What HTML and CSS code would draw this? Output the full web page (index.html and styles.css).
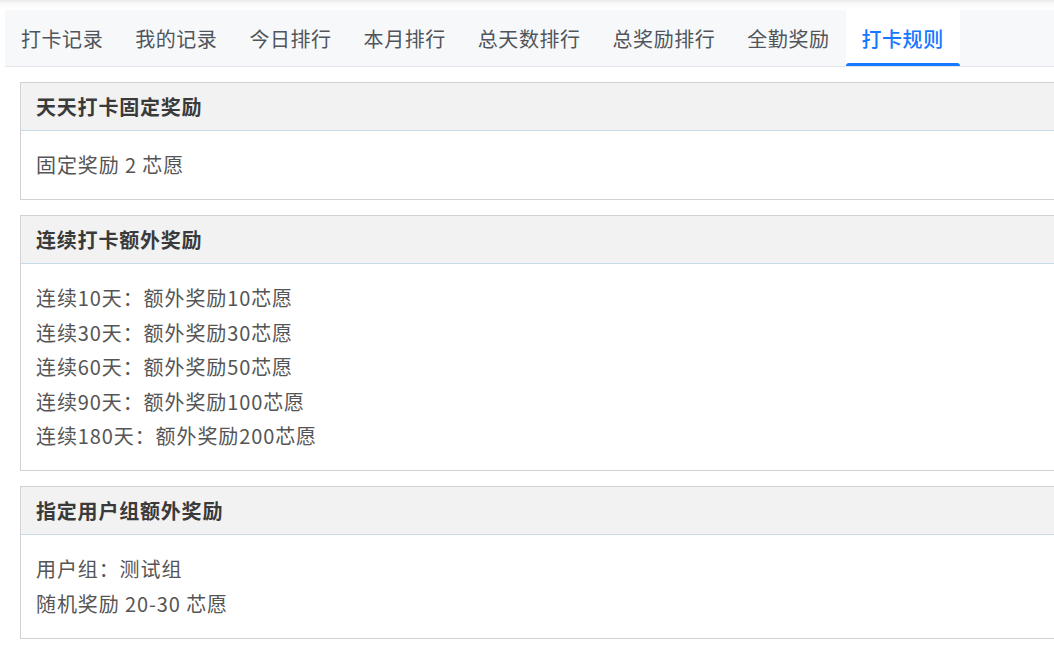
FILE: index.html
```html
<!DOCTYPE html>
<html lang="zh-CN">
<head>
<meta charset="utf-8">
<title>打卡规则</title>
<link rel="stylesheet" href="styles.css">
</head>
<body>
<div class="topshade"></div>
<nav class="tabs">
  <a class="tab">打卡记录</a>
  <a class="tab">我的记录</a>
  <a class="tab">今日排行</a>
  <a class="tab">本月排行</a>
  <a class="tab">总天数排行</a>
  <a class="tab">总奖励排行</a>
  <a class="tab">全勤奖励</a>
  <a class="tab active">打卡规则</a>
</nav>
<main class="content">
  <section class="panel">
    <div class="panel-head">天天打卡固定奖励</div>
    <div class="panel-body">
      <p>固定奖励 2 芯愿</p>
    </div>
  </section>
  <section class="panel">
    <div class="panel-head">连续打卡额外奖励</div>
    <div class="panel-body">
      <p>连续10天：额外奖励10芯愿</p>
      <p>连续30天：额外奖励30芯愿</p>
      <p>连续60天：额外奖励50芯愿</p>
      <p>连续90天：额外奖励100芯愿</p>
      <p>连续180天：额外奖励200芯愿</p>
    </div>
  </section>
  <section class="panel">
    <div class="panel-head">指定用户组额外奖励</div>
    <div class="panel-body">
      <p>用户组：测试组</p>
      <p>随机奖励 20-30 芯愿</p>
    </div>
  </section>
</main>
</body>
</html>
```

FILE: styles.css
```css
html, body {
  margin: 0;
  padding: 0;
  overflow: hidden;
  background: #fff;
}
body {
  font-family: "Noto Sans CJK SC", "Noto Sans", sans-serif;
  width: 1054px;
}
.topshade {
  height: 10px;
  background: linear-gradient(#ececee, #fafafa 40%, #fff);
}
.tabs {
  display: flex;
  margin-left: 5px;
  height: 56px;
  background: #f7f8fa;
  border-bottom: 1px solid #e3e6eb;
}
.tab {
  display: flex;
  align-items: center;
  padding: 0 16px;
  font-size: 20px;
  letter-spacing: 0.55px;
  color: #50555b;
  position: relative;
  white-space: nowrap;
}
.tab.active {
  background: #fff;
  color: #1677ff;
  font-weight: 500;
}
.tab.active::after {
  content: "";
  position: absolute;
  left: 0;
  right: 0;
  bottom: 0;
  height: 3px;
  background: #1677ff;
  border-radius: 3px 3px 0 0;
}
.content {
  padding: 15px 0 0 20px;
  margin-right: -20px;
}
.panel {
  border: 1px solid #d2d2d2;
  margin-bottom: 15px;
}
.panel-head {
  height: 47px;
  display: flex;
  align-items: center;
  padding: 0 15px;
  background: #f2f2f2;
  border-bottom: 1px solid #c8dbe8;
  font-size: 20px;
  font-weight: 700;
  color: #3a3a3a;
  letter-spacing: 0.8px;
}
.panel-body {
  padding: 17px 15px 16.5px;
}
.panel-body p {
  margin: 0;
  font-size: 20px;
  line-height: 34.5px;
  color: #555;
  letter-spacing: 0.9px;
}
```
